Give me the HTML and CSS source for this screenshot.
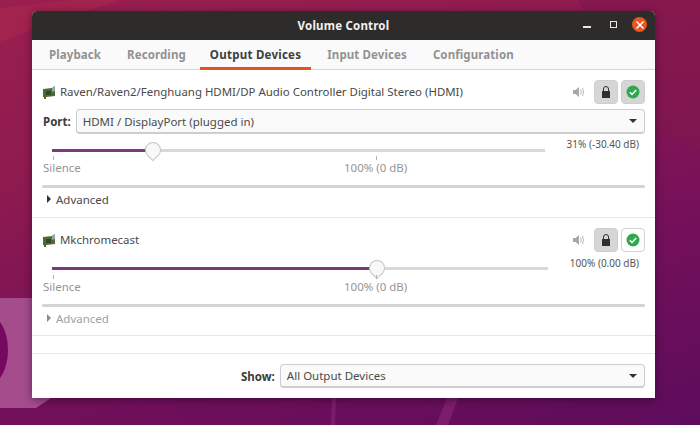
FILE: index.html
```html
<!DOCTYPE html>
<html lang="en">
<head>
  <meta charset="UTF-8" />
  <title>Volume Control</title>
  <link rel="stylesheet" href="styles.css">
</head>
<body>
  <svg class="wallpaper" width="700" height="425" viewBox="0 0 700 425">
    <polygon points="0,8 70,0 120,0 32,30 0,42" fill="#a8274f" opacity="0.6"/>
    <polygon points="0,298 60,298 60,392 36,408 0,408" fill="#a54d8c"/>
    <ellipse cx="-12" cy="350" rx="20" ry="35" fill="#76095f"/>
    <polygon points="578,0 700,0 700,150 640,120" fill="#80174d" opacity="0.6"/>
    <polygon points="332,398 336,398 335,425 331,425" fill="#7e1c6c"/>
    <polygon points="447,398 458,398 448,425 436,425" fill="#7e1c6c"/>
  </svg>

  <div class="window">
    <div class="titlebar">
      <span class="title">Volume Control</span>
      <div class="wm-buttons">
        <span class="wm-min"></span>
        <span class="wm-max"></span>
        <span class="wm-close">
          <svg width="10" height="10" viewBox="0 0 10 10"><path d="M1.500 1.500l7 7M8.500 1.500l-7 7" stroke="#fff" stroke-width="1.500"/></svg>
        </span>
      </div>
    </div>

    <div class="tabs">
      <span class="tab">Playback</span>
      <span class="tab">Recording</span>
      <span class="tab active">Output Devices</span>
      <span class="tab">Input Devices</span>
      <span class="tab">Configuration</span>
    </div>

    <div class="device first">
      <div class="device-head">
        <svg class="card-icon" width="13" height="13" viewBox="0 0 13 13"><path d="M0 3l9-1 3-2v10l-9 1v2H1v-2H0z" fill="#4f6b33"/><rect x="3" y="5" width="5" height="4" fill="#2f4a25"/><path d="M9 2l3-2v5l-3 1z" fill="#8fa8b0"/></svg>
        <span class="device-name">Raven/Raven2/Fenghuang HDMI/DP Audio Controller Digital Stereo (HDMI)</span>
        <svg class="speaker" width="12" height="12" viewBox="0 0 12 12"><path d="M0 4h2.500L6 1v10L2.500 8H0z" fill="#a8a8a8"/><path d="M7.500 3.500q1.500 2.500 0 5M9.500 2q2 4 0 8" stroke="#b8b8b8" fill="none"/></svg>
        <span class="toggle on">
          <svg width="12" height="14" viewBox="0 0 12 14"><path d="M3.500 6V4a2.500 2.500 0 0 1 5 0v2" stroke="#2e2e2e" fill="none"/><rect x="2" y="6" width="8" height="7" fill="#2e2e2e"/></svg>
        </span>
        <span class="toggle on">
          <svg width="16" height="16" viewBox="0 0 16 16"><circle cx="8" cy="8" r="6.500" fill="#2fa84f"/><path d="M4.800 8.200l2.200 2.200 4.200-4.400" stroke="#fff" stroke-width="1.500" fill="none"/></svg>
        </span>
      </div>
      <div class="port-row">
        <span class="field-label">Port:</span>
        <div class="select">
          <span>HDMI / DisplayPort (plugged in)</span>
          <span class="caret"></span>
        </div>
      </div>
      <div class="slider-row">
        <div class="slider">
          <div class="track">
            <div class="track-fill fill-31"></div>
            <span class="thumb"></span>
          </div>
        </div>
        <span class="level">31% (-30.40 dB)</span>
      </div>
      <div class="scale">
        <span class="tick tick-silence"></span>
        <span class="tick tick-full"></span>
        <span class="mark-silence">Silence</span>
        <span class="mark-full">100% (0 dB)</span>
      </div>
      <div class="separator"></div>
      <div class="advanced"><span class="arrow"></span>Advanced</div>
    </div>

    <div class="device second">
      <div class="device-head">
        <svg class="card-icon" width="13" height="13" viewBox="0 0 13 13"><path d="M0 3l9-1 3-2v10l-9 1v2H1v-2H0z" fill="#4f6b33"/><rect x="3" y="5" width="5" height="4" fill="#2f4a25"/><path d="M9 2l3-2v5l-3 1z" fill="#8fa8b0"/></svg>
        <span class="device-name">Mkchromecast</span>
        <svg class="speaker" width="12" height="12" viewBox="0 0 12 12"><path d="M0 4h2.500L6 1v10L2.500 8H0z" fill="#a8a8a8"/><path d="M7.500 3.500q1.500 2.500 0 5M9.500 2q2 4 0 8" stroke="#b8b8b8" fill="none"/></svg>
        <span class="toggle on">
          <svg width="12" height="14" viewBox="0 0 12 14"><path d="M3.500 6V4a2.500 2.500 0 0 1 5 0v2" stroke="#2e2e2e" fill="none"/><rect x="2" y="6" width="8" height="7" fill="#2e2e2e"/></svg>
        </span>
        <span class="toggle">
          <svg width="16" height="16" viewBox="0 0 16 16"><circle cx="8" cy="8" r="6.500" fill="#2fa84f"/><path d="M4.800 8.200l2.200 2.200 4.200-4.400" stroke="#fff" stroke-width="1.500" fill="none"/></svg>
        </span>
      </div>
      <div class="slider-row slider-row-tight">
        <div class="slider">
          <div class="track">
            <div class="track-fill fill-100"></div>
            <span class="thumb"></span>
          </div>
        </div>
        <span class="level">100% (0.00 dB)</span>
      </div>
      <div class="scale">
        <span class="tick tick-silence"></span>
        <span class="tick tick-full"></span>
        <span class="mark-silence">Silence</span>
        <span class="mark-full">100% (0 dB)</span>
      </div>
      <div class="separator"></div>
      <div class="advanced dim"><span class="arrow"></span>Advanced</div>
    </div>

    <div class="spacer"></div>

    <div class="footer">
      <span class="field-label">Show:</span>
      <div class="select">
        <span>All Output Devices</span>
        <span class="caret"></span>
      </div>
    </div>
  </div>
</body>
</html>
```

FILE: styles.css
```css
html, body {
  margin: 0;
  height: 425px;
  overflow: hidden;
}

body {
  font-family: "Noto Sans", "Open Sans", sans-serif;
  font-size: 11.500px;
  color: #4a4a4a;
  background: linear-gradient(165deg, #9a1f4f 0%, #8f1b4f 30%, #75105a 65%, #5d0c5c 100%);
}

.wallpaper {
  position: absolute;
  top: 0;
  left: 0;
}

.window {
  position: relative;
  margin: 11px 0 0 32px;
  width: 623px;
  height: 387px;
  display: flex;
  flex-direction: column;
  background: #fff;
  border-radius: 5px 5px 0 0;
  box-shadow: 0 2px 8px rgba(30, 0, 30, 0.5);
}

.titlebar {
  height: 29px;
  flex: none;
  background: #2e2c2b;
  border-radius: 5px 5px 0 0;
  display: flex;
  align-items: center;
  justify-content: center;
  position: relative;
}

.title {
  color: #f0f0f0;
  font-weight: 700;
  letter-spacing: 0.2px;
}

.wm-buttons {
  position: absolute;
  right: 8px;
  top: 6px;
  display: flex;
  align-items: center;
}

.wm-min {
  width: 8px;
  height: 2px;
  background: #e8e8e8;
  margin-top: 4px;
  margin-right: 19px;
}

.wm-max {
  width: 5px;
  height: 5px;
  border: 1.500px solid #e8e8e8;
  margin-right: 15px;
}

.wm-close {
  width: 15px;
  height: 15px;
  border-radius: 50%;
  background: #e95420;
  display: flex;
  align-items: center;
  justify-content: center;
}

.tabs {
  height: 29px;
  flex: none;
  display: flex;
  padding-left: 7px;
  border-bottom: 1px solid #d8d6d4;
  background: #fafafa;
}

.tab {
  padding: 0 10px;
  margin-right: 6px;
  line-height: 29px;
  font-weight: 700;
  color: #929292;
  letter-spacing: 0.1px;
}

.tab.active {
  color: #3d3d3d;
  box-shadow: inset 0 -3px 0 #e4541b;
  height: 30px;
  margin-left: -2px;
  letter-spacing: 0.25px;
}

.device {
  padding: 0 10px;
  border-bottom: 1px solid #e8e8e8;
  flex: none;
}

.device.first {
  height: 147px;
}

.device.second {
  height: 117px;
}

.device-head {
  display: flex;
  align-items: center;
  height: 24px;
  padding-top: 10px;
}

.card-icon {
  flex: none;
  margin: 0 4px 0 1px;
}

.device-name {
  flex: 1;
  margin-top: -2px;
  font-size: 11.450px;
}

.speaker {
  margin-right: 6px;
}

.toggle {
  width: 24px;
  height: 24px;
  box-sizing: border-box;
  margin-left: 3px;
  border-radius: 4px;
  border: 1px solid #d4d4d4;
  display: flex;
  align-items: center;
  justify-content: center;
}

.toggle.on {
  background: #d6d6d6;
  border-color: #cecece;
}

.port-row {
  display: flex;
  align-items: center;
  margin-top: 5px;
  height: 25px;
}

.field-label {
  font-weight: 700;
  color: #3c3c3c;
  margin: 0 5px 0 1px;
}

.select {
  flex: 1;
  height: 24px;
  box-sizing: border-box;
  border: 1px solid #cdcdcd;
  border-bottom-width: 2px;
  border-radius: 4px;
  background: #fafafa;
  display: flex;
  align-items: center;
  justify-content: space-between;
  padding: 0 7px 0 6px;
}

.port-row .select {
  height: 25px;
}

.caret {
  width: 0;
  height: 0;
  border-left: 4px solid transparent;
  border-right: 4px solid transparent;
  border-top: 4px solid #333;
}

.slider-row {
  display: flex;
  align-items: flex-start;
  margin-top: 3px;
  height: 23px;
}

.slider-row-tight {
  margin-top: 4px;
}

.slider {
  flex: 1;
  padding: 12px 0 0 10px;
}

.slider-row-tight .slider {
  padding-top: 11px;
}

.track {
  position: relative;
  height: 3px;
  background: #d8d8d8;
}

.track-fill {
  height: 3px;
  background: #7a3a82;
}

.fill-31 {
  width: 101px;
}

.fill-100 {
  width: 325px;
}

.thumb {
  position: absolute;
  top: -7px;
  width: 16px;
  height: 16px;
  box-sizing: border-box;
  border: 1px solid #c6c6c6;
  border-radius: 50% 50% 50% 0;
  background: #f8f8f8;
  transform: rotate(-45deg);
}

.fill-31 + .thumb {
  left: 93px;
}

.fill-100 + .thumb {
  left: 317px;
}

.level {
  font-size: 10px;
  color: #555;
  padding: 0 6px 0 22px;
  white-space: nowrap;
}

.scale {
  position: relative;
  height: 25px;
  color: #959595;
  line-height: 15px;
}

.tick {
  position: absolute;
  top: -4px;
  width: 1px;
  height: 4px;
  background: #b0b0b0;
}

.tick-silence {
  left: 11px;
}

.tick-full {
  left: 334px;
}

.mark-silence {
  position: absolute;
  left: 1px;
  top: 0;
}

.mark-full {
  position: absolute;
  left: 302px;
  top: 0;
}

.separator {
  height: 3px;
  background: #d4d4d4;
  border-radius: 2px;
}

.advanced {
  display: flex;
  align-items: center;
  height: 22px;
  padding: 0 0 2px 5px;
}

.advanced.dim {
  color: #a0a0a0;
}

.arrow {
  width: 0;
  height: 0;
  border-top: 4px solid transparent;
  border-bottom: 4px solid transparent;
  border-left: 4px solid #333;
  margin-right: 5px;
}

.dim .arrow {
  border-left-color: #8c8c8c;
}

.spacer {
  height: 17px;
  flex: none;
  border-bottom: 1px solid #e8e8e8;
}

.footer {
  flex: 1;
  display: flex;
  align-items: center;
  padding: 0 10px 0 208px;
}
```
